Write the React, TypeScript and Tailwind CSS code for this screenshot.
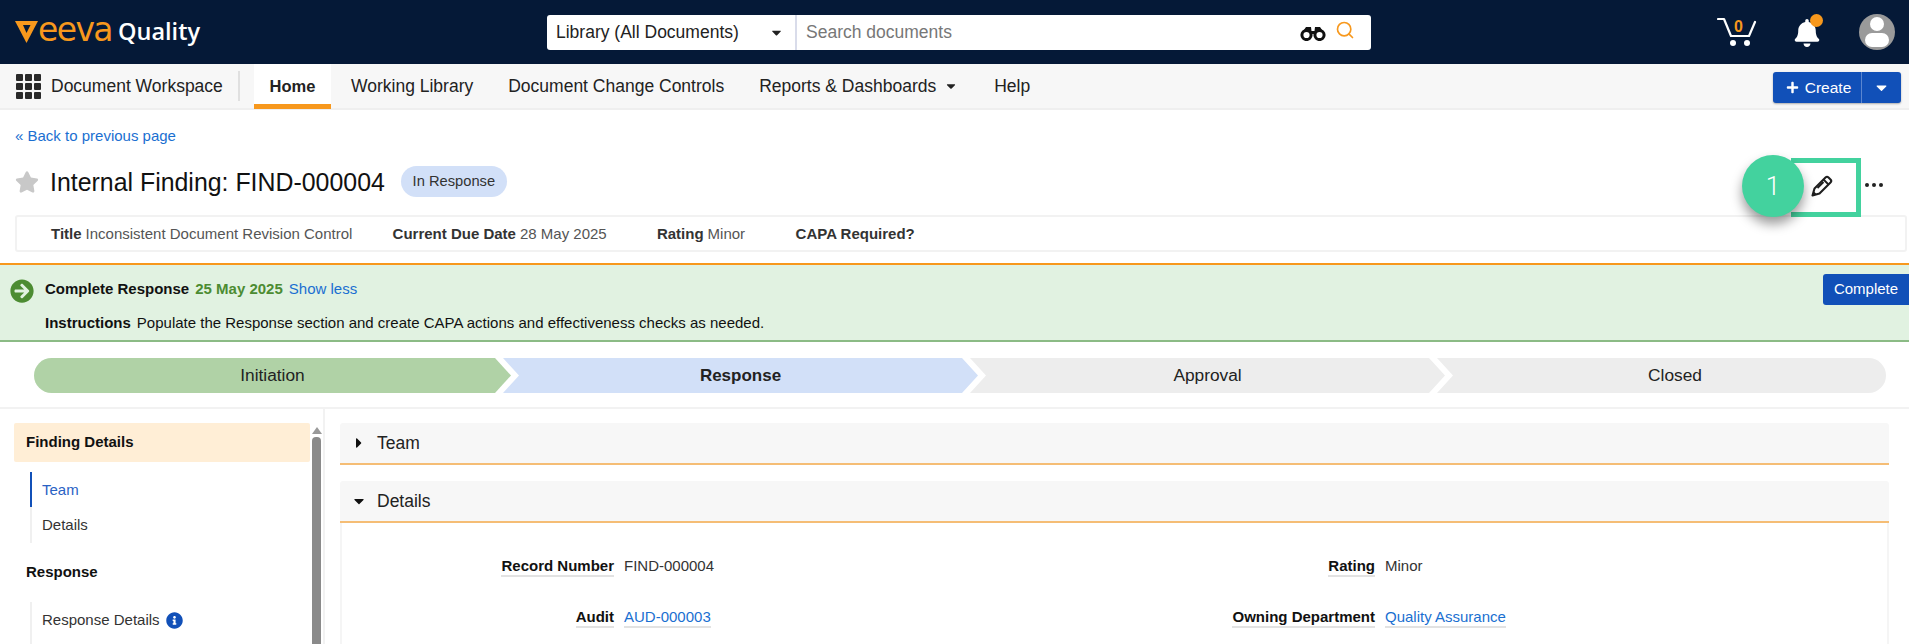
import React from "react";
import { FaBell, FaStar, FaArrowCircleRight, FaInfoCircle, FaCaretDown, FaCaretRight, FaPlus } from "react-icons/fa";
import { Search } from "lucide-react";

const Step = ({ label, cls, bold }: { label: string; cls: string; bold?: boolean }) => (
  <div className={`flex h-[35px] shrink-0 items-center justify-center text-[#222] ${cls} ${bold ? "text-[17px] font-bold" : "text-[17.3px]"}`}>
    {label}
  </div>
);

const Field = ({ label, value, link, w }: { label: string; value: string; link?: boolean; w: string }) => (
  <div className="flex items-center">
    <div className={`flex ${w} justify-end`}>
      <span className="border-b-2 border-[#e2e2e2] font-bold leading-[18px] text-[#111]">{label}</span>
    </div>
    <span className={`ml-[10px] leading-[18px] ${link ? "border-b-2 border-[#e2e2e2] text-[#1a6fd1]" : "-mt-[2px] text-[#333]"}`}>{value}</span>
  </div>
);

export default function App() {
  return (
    <div className="h-[644px] w-[1924px] overflow-hidden bg-white font-['Liberation_Sans',Arial,sans-serif]">
      <div className="w-[1909px]">
        {/* Top bar */}
        <header className="flex h-16 items-center bg-[#051937] pr-[14px]">
          <div className="flex w-[547px] shrink-0 items-center pl-[15px]">
            <div className="flex items-center leading-none text-[#f7981d]">
              <svg width="23" height="22" viewBox="0 0 23 22" className="shrink-0">
                <polygon points="0,0 23,0 11.5,22" fill="#f7981d" />
                <polygon points="8,4 15.5,4 11.5,12" fill="#051937" />
              </svg>
              <span className="-mt-[6px] font-['DejaVu_Sans',sans-serif] text-[33px] tracking-[-1.6px]">eeva</span>
            </div>
            <span className="ml-[6px] font-['Open_Sans',sans-serif] text-[23.5px] font-semibold leading-none text-white">Quality</span>
          </div>
          <div className="flex h-[35px] w-[824px] shrink-0 items-center rounded-[3px] bg-white">
            <div className="flex h-full w-[250px] items-center justify-between border-r-2 border-[#d9dcea] pl-[9px] pr-[11px] text-[17.5px] text-[#222]">
              <span>Library (All Documents)</span>
              <FaCaretDown className="text-[15px] text-[#222]" />
            </div>
            <span className="ml-[9px] flex-1 text-[17.5px] text-[#777]">Search documents</span>
            <svg width="26" height="15" viewBox="0 0 26 15" fill="none" className="mr-[9px] mt-[3px]">
              <circle cx="6.5" cy="9" r="4.6" stroke="#111" strokeWidth="3" />
              <circle cx="19.5" cy="9" r="4.6" stroke="#111" strokeWidth="3" />
              <path d="M2.5 6 L6 1 H11 L11.5 5 H14.5 L15 1 H20 L23.5 6 L19 5 L14 8 H12 L7 5 Z" fill="#111" />
            </svg>
            <Search className="mr-[16px] -mt-[4px] h-[20px] w-[20px] text-[#f7981d]" strokeWidth={2} />
          </div>
          <div className="ml-auto flex items-center">
            <div className="relative h-[30px] w-[40px]">
              <svg width="40" height="30" viewBox="0 0 40 30" fill="none">
                <path d="M1 2h6l7 17h18l6-14" stroke="#fff" strokeWidth="2.2" strokeLinecap="round" strokeLinejoin="round" />
                <circle cx="16" cy="26" r="3" fill="#fff" />
                <circle cx="30" cy="26" r="3" fill="#fff" />
              </svg>
              <span className="absolute left-[17px] top-0 text-[16px] font-bold leading-[20px] text-[#f7981d]">0</span>
            </div>
            <div className="relative ml-[36px] mt-[1px] text-white">
              <FaBell className="text-[28px]" />
              <span className="absolute -right-[2px] -top-[5px] h-[13px] w-[13px] rounded-full bg-[#f7981d]" />
            </div>
            <div className="relative ml-[38px] h-[36px] w-[36px] overflow-hidden rounded-full bg-[#9a9a9a]">
              <span className="absolute left-[11px] top-[3px] h-[14px] w-[14px] rounded-full bg-white" />
              <span className="absolute left-[6px] top-[19px] h-[14px] w-[24px] rounded-[9px] bg-white" />
            </div>
          </div>
        </header>

        {/* Nav */}
        <nav className="flex h-[46px] items-stretch border-b-2 border-[#efefef] bg-[#f7f7f7] pr-[8px] text-[17.5px] text-[#222]">
          <div className="ml-[16px] grid h-[25px] w-[25px] grid-cols-3 gap-[2px] self-center">
            {Array.from({ length: 9 }).map((_, i) => (
              <span key={i} className="rounded-[1px] bg-[#2a2a2a]" />
            ))}
          </div>
          <span className="ml-[10px] w-[187px] self-center whitespace-nowrap">Document Workspace</span>
          <span className="h-[30px] w-[2px] self-center bg-[#e0e0e0]" />
          <div className="-mb-[1px] ml-[14px] flex w-[77px] items-center justify-center border-b-[5px] border-[#f7981d] bg-white pt-[5px] font-bold">
            <span className="text-[16.5px]">Home</span>
          </div>
          <span className="ml-[20px] self-center whitespace-nowrap">Working Library</span>
          <span className="ml-[35px] self-center whitespace-nowrap">Document Change Controls</span>
          <span className="ml-[35px] flex items-center self-center whitespace-nowrap">
            Reports &amp; Dashboards
            <FaCaretDown className="ml-[8px] text-[14px]" />
          </span>
          <span className="ml-[36px] self-center">Help</span>
          <div className="ml-auto mt-[3px] flex h-[31px] items-stretch self-center rounded-[3px] bg-[#1150b8] text-[15.5px] text-white shadow-[0_1px_2px_rgba(0,0,0,0.3)]">
            <div className="flex w-[89px] items-center justify-center gap-[6px] border-r border-[#5b86d0] pl-[3px]">
              <FaPlus className="text-[13px]" />
              <span>Create</span>
            </div>
            <div className="flex w-[39px] items-center justify-center">
              <FaCaretDown className="text-[17px]" />
            </div>
          </div>
        </nav>

        {/* Back link */}
        <div className="flex h-[52px] items-center pl-[15px] text-[15px] text-[#1a6fd1]">« Back to previous page</div>

        {/* Title */}
        <div className="mb-[13px] flex h-[40px] items-center pl-[15px] pr-[26px]">
          <FaStar className="text-[24px] text-[#c8c8c8]" />
          <h1 className="ml-[11px] text-[24.9px] font-normal leading-none text-[#111]">Internal Finding: FIND-000004</h1>
          <span className="-mt-[2px] ml-[16px] flex h-[31px] w-[106px] items-center justify-center rounded-full bg-[#d2e0f8] text-[14.7px] text-[#333]">In Response</span>
          <div className="relative ml-auto mr-[32px] mt-[8px] h-[22px] w-[22px]">
            <svg width="22" height="22" viewBox="0 0 22 22" fill="none">
              <path d="M1.5 20.5 L3.5 13.5 L14.5 2.5 Q16 1 17.5 2.5 L19.5 4.5 Q21 6 19.5 7.5 L8.5 18.5 Z" stroke="#1f1f1f" strokeWidth="2.1" strokeLinejoin="round" />
              <path d="M1.5 20.5 L2.7 16.2 L5.8 19.3 Z" fill="#1f1f1f" />
              <path d="M12.5 4.5 L17.5 9.5 M6.5 13 L12.5 7" stroke="#1f1f1f" strokeWidth="1.8" />
            </svg>
            <div className="absolute -left-[20px] -top-[17px] h-[59px] w-[70px] border-[5px] border-l-0 border-[#43d29e]" />
            <div className="absolute -left-[69px] -top-[20px] flex h-[62px] w-[62px] items-center justify-center rounded-full bg-[#43d29e] font-['Roboto',sans-serif] text-[26px] font-light text-white shadow-[0_7px_12px_rgba(0,0,0,0.4)]">1</div>
          </div>
          <div className="mt-[6px] flex gap-[3px]">
            <span className="h-[4px] w-[4px] rounded-full bg-[#222]" />
            <span className="h-[4px] w-[4px] rounded-full bg-[#222]" />
            <span className="h-[4px] w-[4px] rounded-full bg-[#222]" />
          </div>
        </div>

        {/* Summary */}
        <div className="ml-[15px] mr-[2px] flex h-[37px] items-center rounded-[3px] border-2 border-[#f2f2f2] pl-[34px] pt-[1px] text-[15px] text-[#555]">
          <span className="font-bold text-[#333]">Title</span>
          <span className="ml-[4px] w-[307px] whitespace-nowrap">Inconsistent Document Revision Control</span>
          <span className="font-bold text-[#333]">Current Due Date</span>
          <span className="ml-[4px] w-[137px]">28 May 2025</span>
          <span className="font-bold text-[#333]">Rating</span>
          <span className="ml-[4px] w-[88px]">Minor</span>
          <span className="font-bold text-[#333]">CAPA Required?</span>
        </div>

        {/* Banner */}
        <div className="mt-[11px] flex h-[79px] border-b-2 border-t-2 border-b-[#8bbb85] border-t-[#f7981d] bg-[#e1f2e1]">
          <FaArrowCircleRight className="ml-[10px] mt-[14px] shrink-0 text-[24px] text-[#4c8c32]" />
          <div className="ml-[11px] flex-1 pt-[15px] text-[15px] leading-[18px] text-[#111]">
            <div>
              <span className="font-bold">Complete Response</span>
              <span className="ml-[6px] font-bold text-[#4c8c32]">25 May 2025</span>
              <span className="ml-[6px] text-[#1a6fd1]">Show less</span>
            </div>
            <div className="mt-[16px]">
              <span className="font-bold">Instructions</span>
              <span className="ml-[6px]">Populate the Response section and create CAPA actions and effectiveness checks as needed.</span>
            </div>
          </div>
          <div className="mt-[9px] flex h-[31px] w-[86px] items-center justify-center rounded-l-[3px] bg-[#1150b8] text-[15px] text-white">Complete</div>
        </div>

        {/* Stepper */}
        <div className="flex border-b-2 border-[#f2f2f2] pb-[14px] pl-[34px] pt-[16px]">
          <Step label="Initiation" cls="w-[477px] rounded-l-[18px] bg-[#b0d2a6] [clip-path:polygon(0_0,calc(100%-16px)_0,100%_50%,calc(100%-16px)_100%,0_100%)]" />
          <Step label="Response" bold cls="-ml-[8px] w-[475px] bg-[#d2e0f8] [clip-path:polygon(0_0,calc(100%-16px)_0,100%_50%,calc(100%-16px)_100%,0_100%,16px_50%)]" />
          <Step label="Approval" cls="-ml-[8px] w-[475px] bg-[#ededed] [clip-path:polygon(0_0,calc(100%-16px)_0,100%_50%,calc(100%-16px)_100%,0_100%,16px_50%)]" />
          <div className="-ml-[8px] w-[449px] shrink-0 overflow-hidden rounded-r-[18px]">
            <Step label="Closed" cls="w-full bg-[#ededed] pl-[27px] [clip-path:polygon(0_0,100%_0,100%_100%,0_100%,16px_50%)]" />
          </div>
        </div>

        {/* Main */}
        <div className="flex h-[300px] text-[15px]">
          <aside className="flex w-[325px] shrink-0 border-r-2 border-[#f2f2f2] pl-[14px] pt-[14px]">
            <div className="w-[296px] shrink-0">
              <div className="flex h-[39px] items-center rounded-[2px] bg-[#ffeed6] pl-[12px] font-bold text-[#111]">Finding Details</div>
              <div className="ml-[16px] mt-[10px] border-l-2 border-[#f0f0f0]">
                <div className="-ml-[2px] flex h-[35px] items-center border-l-2 border-[#1150b8] pl-[10px] pt-[2px] text-[#2a62c4]">Team</div>
                <div className="-ml-[2px] flex h-[36px] items-center pl-[12px] text-[#333]">Details</div>
              </div>
              <div className="mt-[20px] pl-[12px] font-bold leading-[18px] text-[#111]">Response</div>
              <div className="ml-[16px] mt-[21px] h-[60px] border-l-2 border-[#f0f0f0] pl-[10px] pt-[7px] text-[#333]">
                <span className="flex items-center">
                  Response Details
                  <FaInfoCircle className="ml-[6px] text-[17px] text-[#1150b8]" />
                </span>
              </div>
            </div>
            <div className="ml-[2px] flex w-[9px] flex-col items-center">
              <span className="mt-[4px] h-0 w-0 border-x-[5px] border-b-[7px] border-x-transparent border-b-[#999]" />
              <span className="mt-[3px] h-[240px] w-[9px] rounded-t-[4px] bg-[#8a8a8a]" />
            </div>
          </aside>
          <main className="flex-1 pl-[15px] pr-[20px] pt-[14px]">
            <div className="flex h-[42px] items-center rounded-t-[3px] border-b-2 border-[#f5bd75] bg-[#f7f7f7] pl-[12px] text-[17.5px] text-[#222]">
              <span className="mr-[11px] flex w-[14px] justify-center"><FaCaretRight className="text-[16px] text-[#111]" /></span>
              Team
            </div>
            <div className="mt-[16px] flex h-[42px] items-center rounded-t-[3px] border-b-2 border-[#f5bd75] bg-[#f7f7f7] pl-[12px] text-[17.5px] text-[#222]">
              <span className="mr-[11px] flex w-[14px] justify-center"><FaCaretDown className="text-[16px] text-[#111]" /></span>
              Details
            </div>
            <div className="h-[130px] border-x-2 border-[#f5f5f5] pt-[34px]">
              <div className="grid grid-cols-[700px_1fr] gap-y-[31px]">
                <Field w="w-[272px]" label="Record Number" value="FIND-000004" />
                <Field w="w-[333px]" label="Rating" value="Minor" />
                <Field w="w-[272px]" label="Audit" value="AUD-000003" link />
                <Field w="w-[333px]" label="Owning Department" value="Quality Assurance" link />
              </div>
            </div>
          </main>
        </div>
      </div>
    </div>
  );
}
